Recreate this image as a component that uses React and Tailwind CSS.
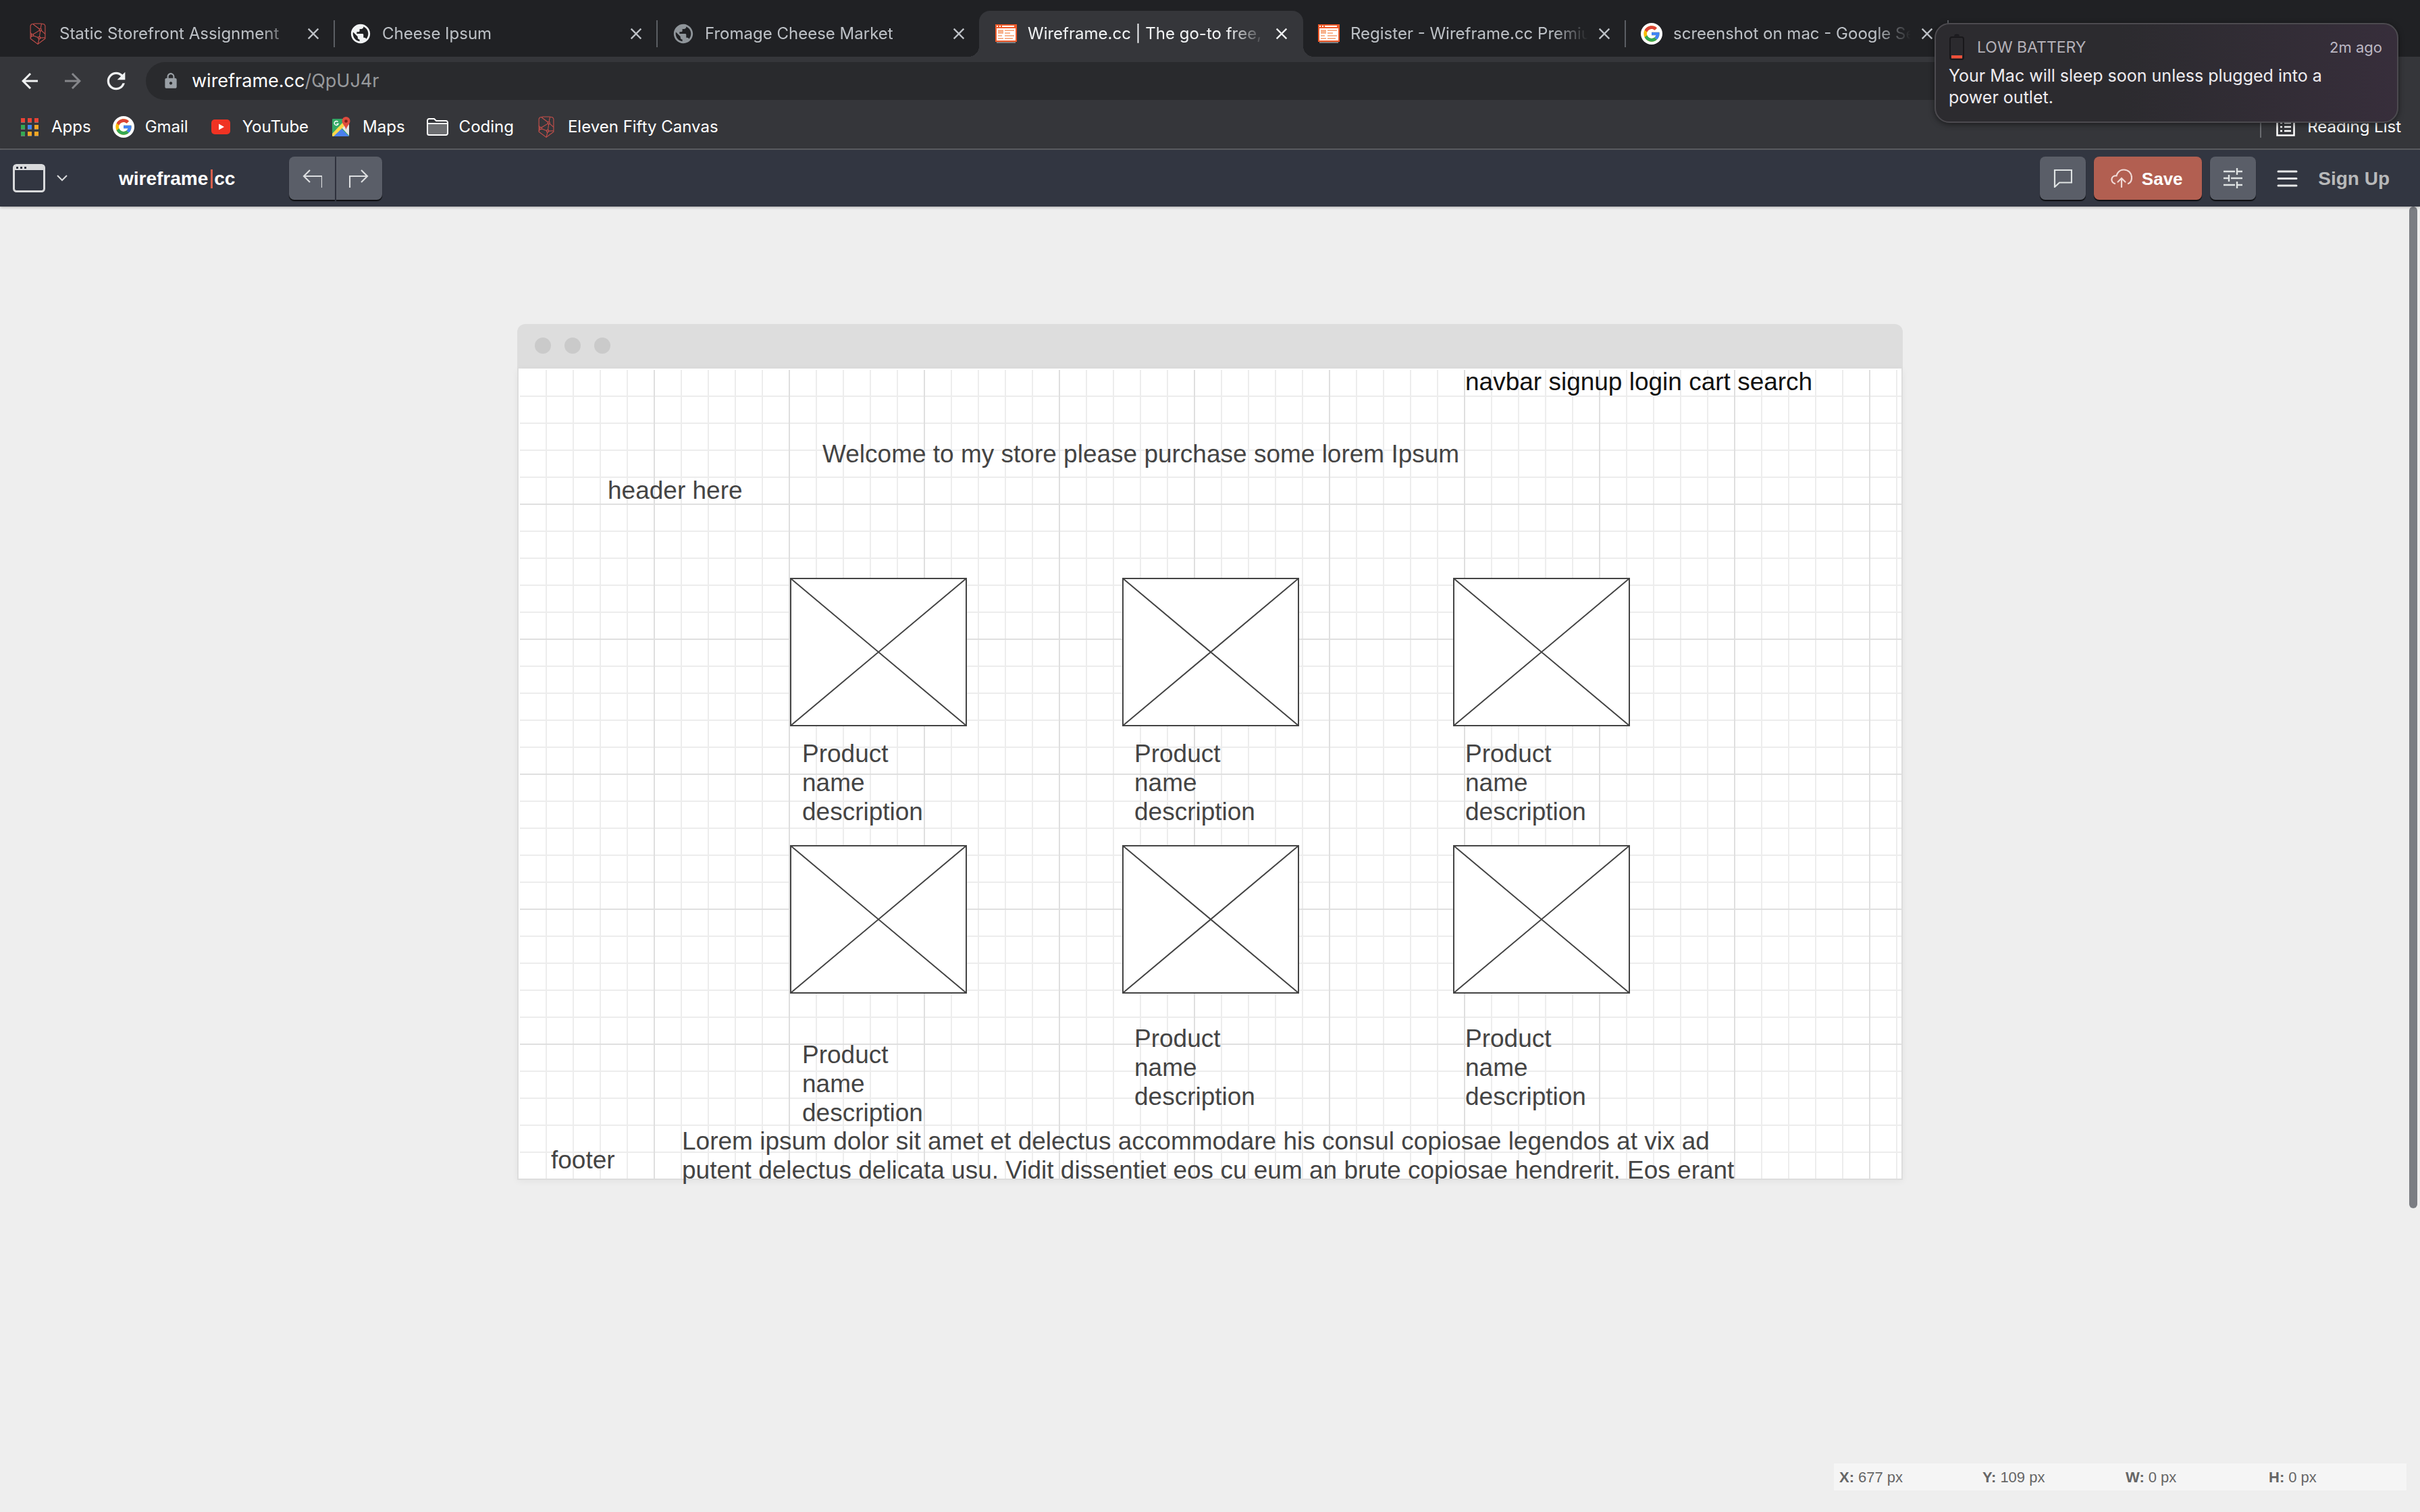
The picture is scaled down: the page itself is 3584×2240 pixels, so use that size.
import { MdPublic, MdRefresh, MdArrowBack, MdArrowForward, MdLock, MdClose } from "react-icons/md";
import { FcGoogle } from "react-icons/fc";

function ElevenFifty() {
  return (
    <svg viewBox="44 42 68 94" className="h-8 w-6" fill="none" stroke="#c9504b" strokeWidth="3.2" aria-hidden="true">
      <path d="M46 54 50 48 64 45H92L106 48 110 54V110L78 134 46 110Z" />
      <path d="M58 48 86 69M94 46 90 67M92 74 110 90M86 74 57 92M46 84 52 92M46 106 52 99M89 76 85 103M58 97 80 106M88 107 110 106M84 111 78 134" />
      <rect x="85" y="68" width="8" height="8" />
      <rect x="50" y="91" width="8" height="8" />
      <rect x="80" y="103" width="8" height="8" />
    </svg>
  );
}

function Globe({ dim }) {
  return <MdPublic className={dim ? "size-[34px] shrink-0 text-[#8f959a]" : "size-[34px] shrink-0 text-[#f1f3f4]"} aria-hidden="true" />;
}

function GoogleMark() {
  return (
    <span className="flex size-8 items-center justify-center rounded-full bg-white">
      <FcGoogle
        className="size-7 [&>path:nth-child(1)]:fill-[#fbbc05] [&>path:nth-child(2)]:fill-[#db4437] [&>path:nth-child(3)]:fill-[#34a853] [&>path:nth-child(4)]:fill-[#4285f4]"
        aria-hidden="true"
      />
    </span>
  );
}

function WireframeMark() {
  return (
    <svg viewBox="0 0 16 14" className="h-7 w-8" shapeRendering="crispEdges" aria-hidden="true">
      <path fill="#7d7f82" d="M1 13h14v1H1z" />
      <path fill="#f15a29" d="M0 0h16v13H0z" />
      <path fill="#fff" d="M1 1h1v1H1zM3 1h1v1H3zM5 1h9v1H5zM1 3h14v9H1z" />
      <path fill="#f7b48f" d="M2 4h4v3H2zM7 4h7v1H7zM7 6h4v1H7zM2 8h3v1H2zM7 8h7v1H7zM2 10h4v1H2zM7 10h6v1H7z" />
    </svg>
  );
}

function AppsIcon() {
  const rows = [
    ["#ea4335", "#ea4335", "#ea4335"],
    ["#34a853", "#4285f4", "#f5a623"],
    ["#34a853", "#f5a623", "#f5a623"],
  ];
  return (
    <svg viewBox="0 0 26 27" className="h-[27px] w-[26px]" shapeRendering="crispEdges" aria-hidden="true">
      {rows.map((row, r) =>
        row.map((fill, c) => (
          <g key={`${r}-${c}`}>
            <rect x={c * 10} y={r * 10 + 1} width="6" height="6" fill="#77797c" />
            <rect x={c * 10} y={r * 10} width="6" height="6" fill={fill} />
          </g>
        ))
      )}
    </svg>
  );
}

function YouTubeIcon() {
  return (
    <svg viewBox="0 0 28 22" className="h-[22px] w-7" aria-hidden="true">
      <rect width="28" height="22" rx="5" fill="#f03323" />
      <path d="M11 6.500v9l8-4.500z" fill="#fff" />
    </svg>
  );
}

function MapsIcon() {
  return (
    <svg viewBox="0 0 28 30" className="h-[30px] w-7" aria-hidden="true">
      <path d="M2 3h18l6 8v17a1 1 0 0 1-1 1H2a1 1 0 0 1-1-1V4a1 1 0 0 1 1-1Z" fill="#34a866" />
      <path d="M26 9v19L14 15Z" fill="#e6e6e6" />
      <path d="m13 16 13 13H2Z" fill="#4a80ee" />
      <path d="M1 25 20 5l3 5L3 29H2a1 1 0 0 1-1-1Z" fill="#fdd74b" />
      <path d="M9.500 7.500A3 3 0 1 0 10 10.500H7.500" fill="none" stroke="#fff" strokeWidth="1.400" />
      <path d="M21.500 0a6 6 0 0 0-6 6c0 5 4.500 7 6 13 1.500-6 6-8 6-13a6 6 0 0 0-6-6Z" fill="#dd4b3e" />
      <circle cx="21.500" cy="6.500" r="2.300" fill="#7c2119" />
    </svg>
  );
}

function FolderIcon() {
  return (
    <svg viewBox="0 0 32 26" className="h-[26px] w-8" fill="none" stroke="#fff" strokeWidth="2" aria-hidden="true">
      <path d="M1 8h30v14.500a2.500 2.500 0 0 1-2.500 2.500h-25A2.500 2.500 0 0 1 1 22.500Z" fill="#6d6e71" />
      <path d="M1 8V3.500A2.500 2.500 0 0 1 3.500 1H11l3 3h14.500A2.500 2.500 0 0 1 31 6.500V8" />
    </svg>
  );
}

function ReadingListIcon() {
  return (
    <svg viewBox="0 0 28 28" className="size-7" fill="none" stroke="#fff" strokeWidth="2.500" aria-hidden="true">
      <rect x="1.500" y="1.500" width="25" height="25" />
      <path d="M6 8h3M12 8h10M6 14h3M12 14h10M6 20h3M12 20h10" />
    </svg>
  );
}

const tabs = [
  { title: "Static Storefront Assignment", icon: <ElevenFifty />, separator: true },
  { title: "Cheese Ipsum", icon: <Globe />, separator: true },
  { title: "Fromage Cheese Market", icon: <Globe dim />, separator: false },
  { title: "Wireframe.cc | The go-to free, online", icon: <WireframeMark />, active: true },
  { title: "Register - Wireframe.cc Premium", icon: <WireframeMark />, separator: true },
  { title: "screenshot on mac - Google Search", icon: <GoogleMark />, separator: true },
];

function Tab({ title, icon, active, separator }) {
  return (
    <div
      className={
        active
          ? "relative -ml-0.5 flex h-[68px] w-[480px] items-center rounded-t-2xl bg-[#35363a] pl-6 text-[#f1f3f4] before:absolute before:bottom-0 before:right-full before:size-4 before:bg-[radial-gradient(circle_at_0_0,transparent_16px,#35363a_16px)] after:absolute after:bottom-0 after:left-full after:size-4 after:bg-[radial-gradient(circle_at_100%_0,transparent_16px,#35363a_16px)]"
          : "flex h-[68px] w-[478px] items-center pl-[22px] text-[#bdc1c6]"
      }
    >
      <span className="flex w-8 shrink-0 items-center justify-center">{icon}</span>
      <span className="ml-4 flex-1 overflow-hidden whitespace-nowrap text-2xl mask-r-from-85%">{title}</span>
      <button type="button" aria-label={`Close ${title}`} className="ml-2 mr-[14px] flex size-8 shrink-0 items-center justify-center">
        <MdClose className="size-7" />
      </button>
      <span className={separator ? "h-10 w-0.5 bg-[#5b5e63]" : "h-10 w-0.5"} />
    </div>
  );
}

const bookmarks = [
  { label: "Apps", icon: <AppsIcon /> },
  { label: "Gmail", icon: <GoogleMark /> },
  { label: "YouTube", icon: <YouTubeIcon /> },
  { label: "Maps", icon: <MapsIcon /> },
  { label: "Coding", icon: <FolderIcon /> },
  { label: "Eleven Fifty Canvas", icon: <ElevenFifty /> },
];

function Bookmark({ label, icon }) {
  return (
    <a href="#" className="flex items-center gap-4">
      <span className="flex h-8 w-8 items-center justify-center">{icon}</span>
      {label}
    </a>
  );
}

function Browser() {
  return (
    <header className="bg-[#35363a] font-['Inter',sans-serif]">
      <div className="flex h-[84px] items-end overflow-hidden bg-[#202124] pl-[18px]">
        {tabs.map((tab) => (
          <Tab key={tab.title} {...tab} />
        ))}
      </div>
      <div className="flex h-[72px] items-center pl-[26px] pr-[200px] text-[#f1f3f4]">
        <button type="button" aria-label="Back"><MdArrowBack className="size-9" /></button>
        <button type="button" aria-label="Forward" className="ml-7 text-[#85868a]"><MdArrowForward className="size-9" /></button>
        <button type="button" aria-label="Reload" className="ml-[26px]"><MdRefresh className="size-10" /></button>
        <div className="ml-6 flex h-14 flex-1 items-center rounded-full bg-[#292a2d] pl-6">
          <MdLock className="size-[26px] text-[#9aa0a6]" aria-hidden="true" />
          <div role="textbox" aria-label="Address" tabIndex={0} className="ml-[18px] text-[27px] leading-9 text-white">
            wireframe.cc<span className="text-[#97999c]">/QpUJ4r</span>
          </div>
        </div>
      </div>
      <nav className="flex h-16 items-center gap-8 px-7 text-2xl text-white">
        {bookmarks.map((b) => (
          <Bookmark key={b.label} {...b} />
        ))}
        <div className="ml-auto flex items-center gap-[22px]">
          <span className="h-8 w-0.5 bg-[#6a6c70]" />
          <button type="button" className="flex items-center gap-[18px]">
            <ReadingListIcon />
            Reading List
          </button>
        </div>
      </nav>
      <div className="h-0.5 bg-[#5f6065]" />
    </header>
  );
}

function Notification() {
  return (
    <aside className="absolute right-8 top-[34px] z-20 h-[148px] w-[687px] rounded-[22px] border-2 border-[#4c4a4f] bg-linear-to-r from-[#2c2b2f] from-40% to-[#372e3b] pl-[19px] pr-5 pt-3.5 font-['Inter',sans-serif] shadow-[0_2px_8px_rgba(0,0,0,0.5)]">
      <div className="flex h-10 items-center text-[#b4b1b8]">
        <svg viewBox="0 0 24 40" className="h-10 w-6" aria-hidden="true">
          <path d="M8 3.500a4 3 0 0 1 8 0Z" fill="#1b1a1e" />
          <rect x="2" y="5" width="20" height="33" rx="3" fill="#2b2a2e" stroke="#19181b" strokeWidth="2" />
          <rect x="4" y="32" width="16" height="4.500" fill="#f0513a" />
        </svg>
        <span className="ml-[18px] text-[23px]">LOW BATTERY</span>
        <span className="ml-auto mr-0.5 text-[22px] text-[#bdb8c4]">2m ago</span>
      </div>
      <p className="mt-1.5 whitespace-nowrap text-[25px] leading-8 text-[#eeecf0]">
        Your Mac will sleep soon unless plugged into a<br />
        power outlet.
      </p>
    </aside>
  );
}

const toolButton = "flex h-16 w-[68px] items-center justify-center bg-[#5a5e68] shadow-[0_2px_1px_rgba(0,0,0,0.75)]";

function AppBar() {
  return (
    <div className="relative z-10 flex h-[84px] items-center bg-[#323641] font-['Liberation_Sans',sans-serif] shadow-[0_1px_4px_rgba(0,0,0,0.3)]">
      <button type="button" aria-label="Choose template" className="ml-[19px] flex items-center gap-[17px]">
        <svg viewBox="0 0 48 42" className="h-[42px] w-12" aria-hidden="true">
          <rect x="1.500" y="1.500" width="45" height="39" rx="4" fill="none" stroke="#d9dadc" strokeWidth="3" />
          <path d="M1 9V5a4 4 0 0 1 4-4h38a4 4 0 0 1 4 4v4Z" fill="#d9dadc" />
          <path d="M5 4h3v3H5zM11 4h3v3h-3zM17 4h3v3h-3z" fill="#323641" />
        </svg>
        <svg viewBox="0 0 16 10" className="h-2.5 w-4" fill="none" stroke="#d9dadc" strokeWidth="2" aria-hidden="true">
          <path d="m1 1 7 7 7-7" />
        </svg>
      </button>
      <a href="#" className="ml-[76px] flex items-center pt-0.5 text-[28px] leading-8 font-bold text-white">
        wireframe<span className="ml-1 mr-0.5 h-7 w-[3px] bg-[#d85f4c]" />cc
      </a>
      <div className="ml-20 flex gap-0.5">
        <button type="button" aria-label="Undo" className={`${toolButton} rounded-l-lg`}>
          <svg viewBox="0 0 30 28" className="h-7 w-[30px]" fill="none" stroke="#dcdee0" strokeWidth="2.200" aria-hidden="true">
            <path d="m12 2-9 9 9 9M3 11h27v17" />
          </svg>
        </button>
        <button type="button" aria-label="Redo" className={`${toolButton} rounded-r-lg`}>
          <svg viewBox="0 0 30 28" className="h-7 w-[30px]" fill="none" stroke="#dcdee0" strokeWidth="2.200" aria-hidden="true">
            <path d="m18 2 9 9-9 9M27 11H1v17" />
          </svg>
        </button>
      </div>
      <div className="ml-auto mr-[45px] flex items-center gap-3">
        <button type="button" aria-label="Comments" className={`${toolButton} rounded-lg`}>
          <svg viewBox="0 0 28 28" className="size-7" fill="none" stroke="#dfe3e3" strokeWidth="2.200" aria-hidden="true">
            <path d="M2 2h25v18.500H9L2 27Z" />
          </svg>
        </button>
        <button type="button" className="flex h-16 w-40 items-center justify-center gap-3.5 rounded-lg bg-[#b25f51] pr-1 text-[26px] text-white shadow-[0_2px_1px_rgba(0,0,0,0.75)]">
          <svg viewBox="0 0 32 28" className="h-7 w-8" fill="none" stroke="#f0d9d5" strokeWidth="2.200" strokeLinecap="round" aria-hidden="true">
            <path d="M6 22C2.500 20.500 1 18 1.500 15 2 12 5 10 8.500 10.500 10 5 14 1.500 19.500 1.500 26 1.500 31 6.500 31 13c0 4-1.500 7.500-5 9" />
            <path d="M16 27V14M10.500 19.500 16 14l5.500 5.500" />
          </svg>
          <span className="pt-0.5 font-bold">Save</span>
        </button>
        <button type="button" aria-label="Settings" className={`${toolButton} rounded-lg`}>
          <svg viewBox="0 0 28 32" className="h-8 w-7" fill="none" stroke="#dfe3e3" strokeWidth="2.400" aria-hidden="true">
            <path d="M0 6h17M20 1v10M20 6h8M0 16h8M8 11v10M11 16h17M0 26h17M20 21v10M20 26h8" />
          </svg>
        </button>
        <a href="#" className="ml-[18px] flex items-center gap-[30px] pt-0.5 text-[28px] leading-8 font-bold text-[#b8b9ba]">
          <svg viewBox="0 0 32 26" className="h-[26px] w-8" stroke="#e6e7e8" strokeWidth="3" strokeLinecap="round" aria-hidden="true">
            <path d="M3 2h27M3 12.500h27M3 23h27" />
          </svg>
          Sign Up
        </a>
      </div>
    </div>
  );
}

const placeholders = [
  "left-[402px] top-[310px]",
  "left-[894px] top-[310px]",
  "left-[1384px] top-[310px]",
  "left-[402px] top-[706px]",
  "left-[894px] top-[706px]",
  "left-[1384px] top-[706px]",
];

const products = [
  "left-[420px] top-[549px]",
  "left-[912px] top-[549px]",
  "left-[1402px] top-[549px]",
  "left-[420px] top-[995px]",
  "left-[912px] top-[971px]",
  "left-[1402px] top-[971px]",
];

function Placeholder({ place }) {
  return (
    <svg viewBox="0 0 262 220" className={`absolute h-[220px] w-[262px] ${place}`} fill="#fff" stroke="#444" strokeWidth="2" role="img" aria-label="Image placeholder">
      <rect x="1" y="1" width="260" height="218" />
      <path d="m1 1 260 218M261 1 1 219" />
    </svg>
  );
}

function Canvas() {
  return (
    <section className="mx-auto mt-[174px] w-[2052px] font-['Liberation_Sans',sans-serif]">
      <div className="flex h-[66px] items-center gap-5 rounded-t-xl bg-[#ddd] px-[26px] pb-0.5">
        <span className="size-6 rounded-full bg-[#cacaca]" />
        <span className="size-6 rounded-full bg-[#cacaca]" />
        <span className="size-6 rounded-full bg-[#cacaca]" />
      </div>
      <div className="relative border-x-2 border-b-2 border-[#ddd] bg-white pl-0.5 pt-0.5 text-[37px] leading-[43px] text-[#444] shadow-[0_2px_10px_rgba(0,0,0,0.05)]">
        <div className="h-[1198px] bg-[linear-gradient(to_right,transparent_198px,#dfdfdf_198px),linear-gradient(to_bottom,transparent_198px,#dfdfdf_198px),linear-gradient(to_right,transparent_38px,#ededed_38px),linear-gradient(to_bottom,transparent_38px,#ededed_38px)] bg-[size:200px_200px,200px_200px,40px_40px,40px_40px]" />
        <p className="absolute left-[1402px] -top-0.5 whitespace-nowrap text-[#111]">navbar signup login cart search</p>
        <p className="absolute left-[450px] top-[105px] whitespace-nowrap">Welcome to my store please purchase some lorem Ipsum</p>
        <p className="absolute left-[132px] top-[159px] whitespace-nowrap">header here</p>
        {placeholders.map((place) => (
          <Placeholder key={place} place={place} />
        ))}
        {products.map((place) => (
          <p key={place} className={`absolute w-[190px] ${place}`}>
            Product name description
          </p>
        ))}
        <p className="absolute left-[48px] top-[1151px] whitespace-nowrap">footer</p>
        <p className="absolute left-[242px] top-[1123px] w-[1580px]">
          Lorem ipsum dolor sit amet et delectus accommodare his consul copiosae legendos at vix ad putent delectus delicata usu. Vidit dissentiet eos cu eum an brute copiosae hendrerit. Eos erant
        </p>
      </div>
    </section>
  );
}

const readouts = [
  ["X", "677 px"],
  ["Y", "109 px"],
  ["W", "0 px"],
  ["H", "0 px"],
];

export default function App() {
  return (
    <div className="relative flex min-h-screen flex-col overflow-hidden bg-[#eee]">
      <Browser />
      <Notification />
      <AppBar />
      <main className="relative flex flex-1 flex-col">
        <Canvas />
        <dl className="mb-8 mr-5 mt-auto flex h-10 items-center self-end bg-[#f5f5f5] font-['Liberation_Sans',sans-serif] text-[22px] text-[#666]">
          {readouts.map(([name, value]) => (
            <div key={name} className="flex w-[212px] gap-1.5 pl-2">
              <dt className="font-bold">{name}:</dt>
              <dd>{value}</dd>
            </div>
          ))}
        </dl>
        <div className="absolute right-1 top-0 h-[1484px] w-3 rounded-full bg-[#7b7d83]" />
      </main>
    </div>
  );
}
